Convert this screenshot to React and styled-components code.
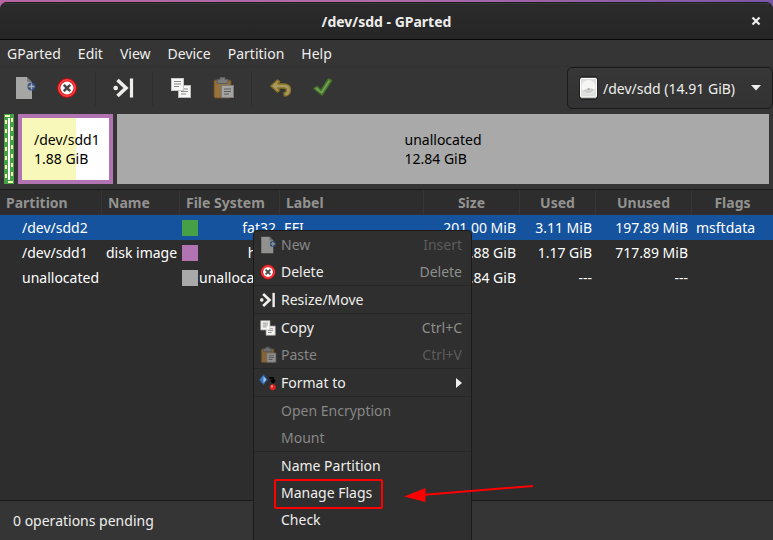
import React from 'react';
import styled, { createGlobalStyle, css } from 'styled-components';

const GlobalStyle = createGlobalStyle`
  *, *::before, *::after { box-sizing: border-box; }
  body {
    margin: 0;
    background: linear-gradient(90deg, #b865a4 0%, #b06aa8 50%, #7b57a8 100%);
    font-family: "Noto Sans", "Open Sans", sans-serif;
    font-size: 14px;
    line-height: 19px;
    color: #eeeeec;
  }
  button, select { font: inherit; color: inherit; background: none; border: 0; margin: 0; padding: 0; }
`;

const Desktop = styled.div`
  position: relative;
  display: flex;
  height: 100vh;
  padding-top: 2px;
  overflow: hidden;
`;

const Window = styled.main`
  flex: 1;
  min-width: 0;
  display: flex;
  flex-direction: column;
  border-radius: 7px 7px 0 0;
  background: #353535;
  overflow: hidden;
`;

const TitleBar = styled.header`
  display: grid;
  grid-template-columns: 34px 1fr 34px;
  align-items: center;
  height: 38px;
  border-top: 1px solid #1c1c1c;
  border-bottom: 1px solid #070707;
  box-shadow: inset 0 1px #383838;
  background: linear-gradient(#2b2b2b, #262626);
`;

const Title = styled.h1`
  grid-column: 2;
  margin: 0;
  font-size: 14px;
  font-weight: 700;
  text-align: center;
`;

const CloseButton = styled.button`
  display: grid;
  place-items: center;
  height: 24px;
`;

const MenuBar = styled.nav`
  display: flex;
  gap: 1px;
  height: 27px;
  border-bottom: 1px solid #303030;
`;

const MenuBarItem = styled.button`
  padding: 0 8px;
  &:first-child { padding-left: 7px; }
`;

const Toolbar = styled.div`
  display: flex;
  align-items: center;
  height: 42px;
  padding-left: 4px;
`;

const ToolButton = styled.button`
  display: grid;
  place-items: center;
  width: 42px;
  height: 36px;
  &:disabled { opacity: 0.6; }
`;

const ToolSeparator = styled.span`
  width: 1px;
  height: 35px;
  margin: 0 7px;
  background: #2e2e2e;
`;

const DeviceField = styled.label`
  display: flex;
  align-items: center;
  gap: 5px;
  height: 42px;
  margin-left: auto;
  padding: 0 11px;
  border: 1px solid #1b1b1b;
  border-radius: 5px;
  background: linear-gradient(#373737, #323232);
`;

const DeviceSelect = styled.select`
  appearance: none;
  width: 143px;
  height: 32px;
  outline: none;
`;

const DiskMap = styled.section`
  display: flex;
  gap: 4px;
  height: 81px;
  padding: 5px 4px;
  border-bottom: 1px solid #1b1b1b;
  line-height: 19px;
  color: #000;
`;

const SelectedBlock = styled.div`
  flex: 0 0 10px;
  background: #46a046;
`;

const DataBlock = styled.div`
  flex: 0 0 95px;
  display: flex;
  flex-direction: column;
  justify-content: center;
  padding-left: 12px;
  border: 4px solid #b173b1;
  background: linear-gradient(90deg, #f8f8ba 62%, #fff 62%);
  white-space: nowrap;
`;

const FreeBlock = styled.div`
  flex: 1;
  display: grid;
  place-content: center;
  background: #a9a9a9;
`;

const ListArea = styled.section`
  flex: 1;
  min-height: 0;
  background: #2d2d2d;
`;

const PartitionTable = styled.table`
  width: 100%;
  table-layout: fixed;
  border-collapse: separate;
  border-spacing: 0;
`;

const Column = styled.col`
  width: ${(p) => p.$width};
`;

const HeadCell = styled.th`
  height: 25px;
  padding: 0 6px;
  border-right: 1px solid #353535;
  border-bottom: 1px solid #323232;
  color: #929290;
  font-weight: 700;
  text-align: ${(p) => p.$align || 'left'};
  white-space: nowrap;
  &:last-child { border-right: 0; }
`;

const Row = styled.tr`
  background: ${(p) => (p.$selected ? '#15539e' : 'transparent')};
  color: #fff;
`;

const Cell = styled.td`
  height: 25px;
  padding: 0 4px 0 ${(p) => (p.$indent ? '22px' : '4px')};
  text-align: ${(p) => p.$align || 'left'};
  white-space: nowrap;
`;

const FileSystem = styled.div`
  display: flex;
  align-items: center;
  justify-content: space-between;
  margin-left: -2px;
`;

const Swatch = styled.span`
  width: 16px;
  height: 16px;
  background: ${(p) => p.$color};
`;

const StatusBar = styled.footer`
  display: flex;
  align-items: center;
  height: 40px;
  padding-left: 13px;
  border-top: 1px solid #1b1b1b;
`;

const ContextMenu = styled.div`
  position: absolute;
  top: 230px;
  bottom: -8px;
  left: 253px;
  width: 219px;
  border: 1px solid #1b1b1b;
  border-radius: 4px;
  background: #2f2f2f;
`;

const MenuItem = styled.button`
  position: relative;
  display: grid;
  grid-template-columns: 16px 1fr auto;
  column-gap: 5px;
  align-items: center;
  width: 100%;
  height: 27px;
  padding: 0 9px 0 6px;
  text-align: left;
  > svg:first-child {
    width: 18px;
    height: 18px;
    margin: 0 -1px;
    opacity: ${(p) => (p.disabled ? 0.5 : 1)};
  }
  ${(p) => p.disabled && css`color: #868685;`}
`;

const ItemLabel = styled.span`
  grid-column: 2;
`;

const Shortcut = styled.span`
  color: ${(p) => (p.$dim ? '#5c5c5c' : '#8e8e8d')};
`;

const MenuSeparator = styled.div`
  height: 1px;
  background: #272727;
`;

const Highlight = styled.span`
  position: absolute;
  inset: 0 88px -3px 20px;
  border: 2px solid #f00;
  border-radius: 2px;
`;

const Pointer = styled.svg`
  position: absolute;
  top: 481px;
  left: 402px;
`;

function NewIcon() {
  return (
    <svg width="24" height="24" viewBox="0 0 24 24" aria-hidden="true">
      <path d="M3 1h11l5 5v17H3z" fill="#f2f2f0" />
      <path d="M14 1v5h5z" fill="#aaa" />
      <path d="M14 1l5 5" stroke="#777" />
      <circle cx="18.5" cy="10.5" r="4" fill="#2765b5" />
      <path d="M18.5 7.5v6M15.5 10.5h6" stroke="#fff" strokeWidth="1.5" />
    </svg>
  );
}

function DeleteIcon() {
  return (
    <svg width="24" height="24" viewBox="0 0 24 24" aria-hidden="true">
      <circle cx="12" cy="12" r="9.5" fill="#e51c20" stroke="#b80e12" />
      <circle cx="12" cy="12" r="8.2" fill="none" stroke="#ff5557" />
      <circle cx="12" cy="12" r="6.5" fill="#fff" />
      <path d="M8.8 8.8l6.4 6.4M15.2 8.8l-6.4 6.4" stroke="#484848" strokeWidth="2.6" />
    </svg>
  );
}

function ResizeIcon() {
  return (
    <svg width="24" height="24" viewBox="0 0 24 24" aria-hidden="true">
      <rect x="1.500" y="9.800" width="4.400" height="4.400" rx="1.800" fill="#eeeeec" />
      <path d="M5.500 4l8.500 8-8.500 8" fill="none" stroke="#eeeeec" strokeWidth="3.600" />
      <path d="M19.500 2.500v19" stroke="#eeeeec" strokeWidth="3.200" />
    </svg>
  );
}

function CopyIcon() {
  return (
    <svg width="24" height="24" viewBox="0 0 24 24" aria-hidden="true">
      <rect x="9.5" y="9.5" width="12" height="12" fill="#f7f7f5" stroke="#bbb" />
      <path d="M12 13h7M12 15.5h7M12 18h5" stroke="#888" strokeWidth="1.2" />
      <rect x="2.5" y="2.5" width="12" height="12" fill="#f7f7f5" stroke="#c7c7c5" />
      <path d="M5 5.5h7M5 8h7M5 10.5h5" stroke="#888" strokeWidth="1.2" />
    </svg>
  );
}

function PasteIcon() {
  return (
    <svg width="24" height="24" viewBox="0 0 24 24" aria-hidden="true">
      <rect x="3" y="4" width="17" height="18" rx="1.5" fill="#d79b43" stroke="#8b5c18" />
      <path d="M6 3.5h3v-2h5v2h3v4H6z" fill="#aaa" stroke="#777" />
      <rect x="10.5" y="9.5" width="12" height="12" fill="#f0f0ee" stroke="#aaa" />
      <path d="M13 13h7M13 15.5h7M13 18h5" stroke="#777" strokeWidth="1.2" />
    </svg>
  );
}

function UndoIcon() {
  return (
    <svg width="24" height="24" viewBox="0 0 24 24" aria-hidden="true">
      <path
        d="M3 10l6.500-6 2 1.500-2 2.500h6c4.500 0 7 2.500 7 6 0 3.500-2.500 6-6 6l-.5-3c1.500-.5 2.500-1.500 2.500-2.800 0-1.700-1-2.200-3-2.200h-6l2 2.500-2 1.500z"
        fill="#f3e08a"
        stroke="#c7a017"
        strokeWidth="1.5"
        strokeLinejoin="round"
      />
    </svg>
  );
}

function ApplyIcon() {
  return (
    <svg width="24" height="24" viewBox="0 0 24 24" aria-hidden="true">
      <path d="M4 12.5l3-2 4 4L18.500 3l3 1.5L12 19z" fill="#a5e878" stroke="#4ea51c" strokeWidth="1.5" strokeLinejoin="round" />
    </svg>
  );
}

function FormatIcon() {
  return (
    <svg width="16" height="16" viewBox="0 0 16 16" aria-hidden="true">
      <path d="M4 1l3.2 4L4 9 .8 5z" fill="#a9c8ee" stroke="#285a9c" />
      <path d="M4 1v8L.8 5z" fill="#3b75bd" />
      <path d="M9 3.500h3.500V7M10.500 5.500l2 2 2-2" fill="none" stroke="#000" strokeWidth="1.5" />
      <circle cx="12.200" cy="11.800" r="2.600" fill="#e52020" />
      <circle cx="11.500" cy="11" r="1" fill="#ff9a94" />
    </svg>
  );
}

function DriveIcon() {
  return (
    <svg width="19" height="24" viewBox="0 0 19 24" aria-hidden="true">
      <rect x="1" y="1" width="17" height="22" rx="1.5" fill="#8a8a88" stroke="#111" />
      <rect x="1.5" y="2.5" width="16" height="18.5" rx="1" fill="#dededc" stroke="#fff" />
      <circle cx="9.5" cy="11" r="7" fill="#f6f6f5" />
      <path d="M3.500 14.500a7 7 0 0 0 12-1l-5-1.500z" fill="#cfcfcd" />
      <circle cx="9.5" cy="13" r="1" fill="#aaa" />
    </svg>
  );
}

function SelectionFrame() {
  return (
    <svg width="10" height="70" viewBox="0 0 10 70" aria-hidden="true">
      <path d="M5 4v62" stroke="#fff" strokeWidth="2" />
      <path d="M1 2h5M4 68h5" stroke="#f8f8ba" strokeWidth="2" />
      <path d="M2 6v60M8 4v62" stroke="#f8f8ba" strokeWidth="2" strokeDasharray="4 5" />
    </svg>
  );
}

const partitions = [
  { name: '/dev/sdd2', label: 'EFI', fs: 'fat32', color: '#46a046', size: '201.00 MiB', used: '3.11 MiB', unused: '197.89 MiB', flags: 'msftdata', selected: true },
  { name: '/dev/sdd1', title: 'disk image', fs: 'hfs+', color: '#b173b1', size: '1.88 GiB', used: '1.17 GiB', unused: '717.89 MiB' },
  { name: 'unallocated', fs: 'unallocated', color: '#a9a9a9', size: '12.84 GiB', used: '---', unused: '---' },
];

const columnWidths = ['102px', '78px', '100px', '144px', '96px', '76px', '96px', 'auto'];

const menuGroups = [
  [
    { label: 'New', icon: <NewIcon />, keys: 'Insert', disabled: true },
    { label: 'Delete', icon: <DeleteIcon />, keys: 'Delete' },
  ],
  [{ label: 'Resize/Move', icon: <ResizeIcon /> }],
  [
    { label: 'Copy', icon: <CopyIcon />, keys: 'Ctrl+C' },
    { label: 'Paste', icon: <PasteIcon />, keys: 'Ctrl+V', disabled: true },
  ],
  [{ label: 'Format to', icon: <FormatIcon />, submenu: true }],
  [
    { label: 'Open Encryption', disabled: true },
    { label: 'Mount', disabled: true },
  ],
  [{ label: 'Name Partition' }, { label: 'Manage Flags', highlighted: true }, { label: 'Check' }],
];

export default function App() {
  return (
    <>
      <GlobalStyle />
      <Desktop>
        <Window>
          <TitleBar>
            <Title>/dev/sdd - GParted</Title>
            <CloseButton aria-label="Close">
              <svg width="10" height="10" viewBox="0 0 10 10" aria-hidden="true">
                <path d="M1.5 1.5l7 7M8.5 1.5l-7 7" stroke="#eeeeec" strokeWidth="2.2" />
              </svg>
            </CloseButton>
          </TitleBar>
          <MenuBar>
            {['GParted', 'Edit', 'View', 'Device', 'Partition', 'Help'].map((m) => (
              <MenuBarItem key={m}>{m}</MenuBarItem>
            ))}
          </MenuBar>
          <Toolbar>
            <ToolButton aria-label="New" disabled><NewIcon /></ToolButton>
            <ToolButton aria-label="Delete"><DeleteIcon /></ToolButton>
            <ToolSeparator />
            <ToolButton aria-label="Resize/Move"><ResizeIcon /></ToolButton>
            <ToolSeparator />
            <ToolButton aria-label="Copy"><CopyIcon /></ToolButton>
            <ToolButton aria-label="Paste" disabled><PasteIcon /></ToolButton>
            <ToolSeparator />
            <ToolButton aria-label="Undo" disabled><UndoIcon /></ToolButton>
            <ToolButton aria-label="Apply" disabled><ApplyIcon /></ToolButton>
            <DeviceField>
              <DriveIcon />
              <DeviceSelect aria-label="Device">
                <option>/dev/sdd (14.91 GiB)</option>
              </DeviceSelect>
              <svg width="10" height="6" viewBox="0 0 10 6" aria-hidden="true">
                <path d="M0 0h10L5 5.5z" fill="#eeeeec" />
              </svg>
            </DeviceField>
          </Toolbar>
          <DiskMap>
            <SelectedBlock><SelectionFrame /></SelectedBlock>
            <DataBlock>
              <span>/dev/sdd1</span>
              <span>1.88 GiB</span>
            </DataBlock>
            <FreeBlock>
              <span>unallocated</span>
              <span>12.84 GiB</span>
            </FreeBlock>
          </DiskMap>
          <ListArea>
            <PartitionTable>
              <colgroup>
                {columnWidths.map((w, i) => <Column key={i} $width={w} />)}
              </colgroup>
              <thead>
                <tr>
                  <HeadCell>Partition</HeadCell>
                  <HeadCell>Name</HeadCell>
                  <HeadCell>File System</HeadCell>
                  <HeadCell>Label</HeadCell>
                  <HeadCell $align="center">Size</HeadCell>
                  <HeadCell $align="center">Used</HeadCell>
                  <HeadCell $align="center">Unused</HeadCell>
                  <HeadCell $align="center">Flags</HeadCell>
                </tr>
              </thead>
              <tbody>
                {partitions.map((p) => (
                  <Row key={p.name} $selected={p.selected}>
                    <Cell $indent>{p.name}</Cell>
                    <Cell>{p.title}</Cell>
                    <Cell>
                      <FileSystem><Swatch $color={p.color} />{p.fs}</FileSystem>
                    </Cell>
                    <Cell>{p.label}</Cell>
                    <Cell $align="right">{p.size}</Cell>
                    <Cell $align="right">{p.used}</Cell>
                    <Cell $align="right">{p.unused}</Cell>
                    <Cell>{p.flags}</Cell>
                  </Row>
                ))}
              </tbody>
            </PartitionTable>
          </ListArea>
          <StatusBar>0 operations pending</StatusBar>
        </Window>
        <ContextMenu role="menu">
          {menuGroups.map((group, i) => (
            <React.Fragment key={i}>
              {i > 0 && <MenuSeparator />}
              {group.map((item) => (
                <MenuItem key={item.label} role="menuitem" disabled={item.disabled}>
                  {item.icon}
                  <ItemLabel>{item.label}</ItemLabel>
                  {item.keys && <Shortcut $dim={item.disabled}>{item.keys}</Shortcut>}
                  {item.submenu && (
                    <svg width="6" height="10" viewBox="0 0 6 10" aria-hidden="true">
                      <path d="M0 0l6 5-6 5z" fill="#eeeeec" />
                    </svg>
                  )}
                  {item.highlighted && <Highlight />}
                </MenuItem>
              ))}
            </React.Fragment>
          ))}
        </ContextMenu>
        <Pointer width="134" height="24" viewBox="0 0 134 24" aria-hidden="true">
          <path d="M20 14L131 5" stroke="#f00" strokeWidth="2" />
          <path d="M2 15.5L23.5 7v14z" fill="#f00" />
        </Pointer>
      </Desktop>
    </>
  );
}
